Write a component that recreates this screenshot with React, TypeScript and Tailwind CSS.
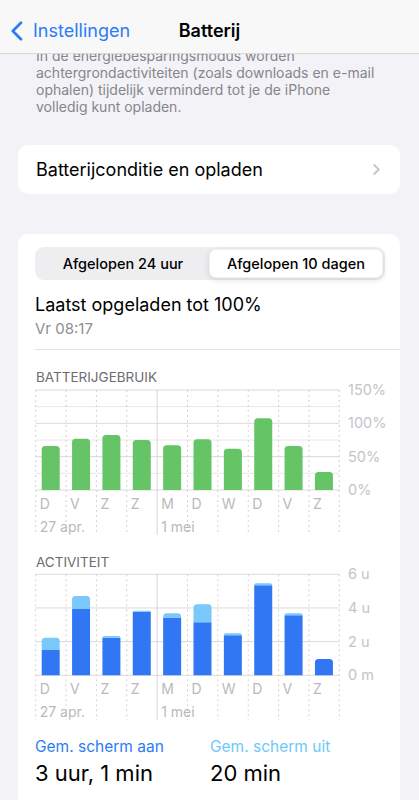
import React from "react";

const FONT = { fontFamily: "Inter, 'Noto Sans', sans-serif" };

const DAYS = ["D", "V", "Z", "Z", "M", "D", "W", "D", "V", "Z"];
const X0 = 0.7;
const CW = 30.36;

function topRounded(x: number, y: number, w: number, h: number, r: number) {
  const rr = Math.min(r, h);
  return `M${x},${y + h} V${y + rr} Q${x},${y} ${x + rr},${y} H${x + w - rr} Q${x + w},${y} ${x + w},${y + rr} V${y + h} Z`;
}

type Seg = { value: number; color: string };

function Chart({
  bars,
  max,
  plotTop,
  plotBottom,
  lines,
  labels,
}: {
  bars: Seg[][];
  max: number;
  plotTop: number;
  plotBottom: number;
  lines: { v: number; strong: boolean }[];
  labels: { v: number; text: string }[];
}) {
  const ph = plotBottom - plotTop;
  const yOf = (v: number) => plotBottom - (v / max) * ph;
  const right = X0 + CW * 10;
  return (
    <svg width="365" height="150" className="block ml-[17px] overflow-visible" style={FONT}>
      {lines.map((l, i) => (
        <line
          key={i}
          x1={X0}
          x2={right}
          y1={yOf(l.v)}
          y2={yOf(l.v)}
          stroke={l.strong ? "#dadadd" : "#e8e8ea"}
          strokeWidth="1"
        />
      ))}
      {Array.from({ length: 11 }).map((_, i) => {
        const x = X0 + CW * i;
        return (
          <line
            key={i}
            x1={x}
            x2={x}
            y1={plotTop}
            y2={149}
            stroke={i === 4 ? "#d6d6d9" : "#d3d3d6"}
            strokeWidth="1"
            strokeDasharray={i === 4 ? undefined : "2 3"}
          />
        );
      })}
      {bars.map((segs, i) => {
        const x = X0 + CW * i + 6;
        const total = segs.reduce((a, s) => a + s.value, 0);
        const out: React.ReactNode[] = [];
        let acc = 0;
        segs.forEach((s, j) => {
          const yTop = yOf(acc + s.value);
          const yBot = yOf(acc);
          const isTop = acc + s.value >= total - 0.0001;
          out.push(
            <path
              key={j}
              d={topRounded(x, yTop, 18, yBot - yTop, isTop ? 3.5 : 0)}
              fill={s.color}
            />
          );
          acc += s.value;
        });
        return <g key={i}>{out}</g>;
      })}
      {labels.map((l, i) => (
        <text key={i} x="313" y={yOf(l.v) + 5} fontSize="14.5" fill="#c4c4c7">
          {l.text}
        </text>
      ))}
      {DAYS.map((d, i) => (
        <text key={i} x={X0 + CW * i + 4} y="123" fontSize="14" fill="#b9b9bd">
          {d}
        </text>
      ))}
      <text x={X0 + 4} y="146" fontSize="14" fill="#b9b9bd">
        27 apr.
      </text>
      <text x={X0 + CW * 4 + 4} y="146" fontSize="14" fill="#b9b9bd">
        1 mei
      </text>
    </svg>
  );
}

const GREEN = "#65c466";
const DARK = "#3177f4";
const LIGHT = "#7bc8fa";

const battery = [66, 77, 82.5, 75, 67, 76, 62, 107.5, 66, 27].map((v) => [
  { value: v, color: GREEN },
]);

const activity = [
  [1.5, 2.23],
  [3.94, 4.71],
  [2.23, 2.33],
  [3.78, 3.84],
  [3.44, 3.68],
  [3.15, 4.22],
  [2.38, 2.5],
  [5.35, 5.47],
  [3.56, 3.68],
  [0.97, 0.97],
].map(([d, t]) =>
  t > d
    ? [
        { value: d, color: DARK },
        { value: t - d, color: LIGHT },
      ]
    : [{ value: d, color: DARK }]
);

export default function App() {
  return (
    <div className="min-h-screen bg-[#f2f2f7] text-black overflow-hidden" style={FONT}>
      <div className="relative z-10 h-[54px] bg-[#f8f8f8] border-b border-[#d9d9dc] flex items-start pt-[20px]">
        <div className="flex items-center h-[22px] pl-[10px] w-[150px]">
          <svg width="13" height="20" viewBox="0 0 13 20" className="mr-[10px]">
            <path d="M11 1.8 L2.8 10 L11 18.2" fill="none" stroke="#2b7cf6" strokeWidth="2.7" strokeLinecap="round" strokeLinejoin="round" />
          </svg>
          <span className="text-[18px] leading-[22px] text-[#2b7cf6]">Instellingen</span>
        </div>
        <div className="w-[119px] text-center text-[18px] leading-[22px] font-semibold">Batterij</div>
      </div>

      <p className="-mt-[7px] px-[36px] text-[14px] leading-[17px] text-[#86868b]">
        In de energiebesparingsmodus worden
        <br />
        achtergrondactiviteiten (zoals downloads en e-mail
        <br />
        ophalen) tijdelijk verminderd tot je de iPhone
        <br />
        volledig kunt opladen.
      </p>

      <div className="mt-[30px] ml-[18px] mr-[19px] h-[49px] bg-white rounded-[10px] flex items-center justify-between pl-[18px] pr-[20px]">
        <span className="text-[18px] leading-[22px]">Batterijconditie en opladen</span>
        <svg width="7" height="11" viewBox="0 0 7 11">
          <path d="M1.2 1 L5.8 5.5 L1.2 10" fill="none" stroke="#c4c4c7" strokeWidth="1.8" strokeLinecap="round" strokeLinejoin="round" />
        </svg>
      </div>

      <div className="mt-[40px] ml-[18px] mr-[19px] bg-white rounded-t-[10px] pt-[13px] pb-[40px]">
        <div className="ml-[17px] mr-[15px] h-[33px] rounded-[9px] bg-[#eeeef0] p-[2px] flex">
          <div className="flex-1 flex items-center justify-center text-[14.5px] font-medium">Afgelopen 24 uur</div>
          <div className="flex-1 flex items-center justify-center text-[14.5px] font-medium bg-white rounded-[7px] shadow-[0_2px_6px_rgba(0,0,0,0.12)] border border-black/5">
            Afgelopen 10 dagen
          </div>
        </div>

        <div className="mt-[14px] ml-[17px] text-[18px] leading-[22px]">Laatst opgeladen tot 100%</div>
        <div className="mt-[3px] ml-[17px] text-[15px] leading-[20px] text-[#8e8e93]">Vr 08:17</div>
        <div className="mt-[10px] ml-[17px] h-px bg-[#e2e2e4]" />

        <div className="mt-[18px] ml-[18px] text-[13.5px] leading-[18px] text-[#6d6d72]">BATTERIJGEBRUIK</div>
        <Chart
          bars={battery}
          max={150}
          plotTop={4}
          plotBottom={104}
          lines={[0, 25, 50, 75, 100, 125, 150].map((v) => ({ v, strong: v % 50 === 0 }))}
          labels={[
            { v: 150, text: "150%" },
            { v: 100, text: "100%" },
            { v: 50, text: "50%" },
            { v: 0, text: "0%" },
          ]}
        />

        <div className="mt-[17px] ml-[18px] text-[13.5px] leading-[18px] text-[#6d6d72]">ACTIVITEIT</div>
        <Chart
          bars={activity}
          max={6}
          plotTop={3.3}
          plotBottom={104.3}
          lines={[0, 2, 4, 6].map((v) => ({ v, strong: true }))}
          labels={[
            { v: 6, text: "6 u" },
            { v: 4, text: "4 u" },
            { v: 2, text: "2 u" },
            { v: 0, text: "0 m" },
          ]}
        />

        <div className="mt-[16px] ml-[17px] flex">
          <div className="w-[175px]">
            <div className="text-[15.5px] leading-[20px] text-[#2b7cf6]">Gem. scherm aan</div>
            <div className="mt-[3px] text-[22px] leading-[26px]">3 uur, 1 min</div>
          </div>
          <div>
            <div className="text-[15.5px] leading-[20px] text-[#6ec8f9]">Gem. scherm uit</div>
            <div className="mt-[3px] text-[22px] leading-[26px]">20 min</div>
          </div>
        </div>
      </div>
    </div>
  );
}
